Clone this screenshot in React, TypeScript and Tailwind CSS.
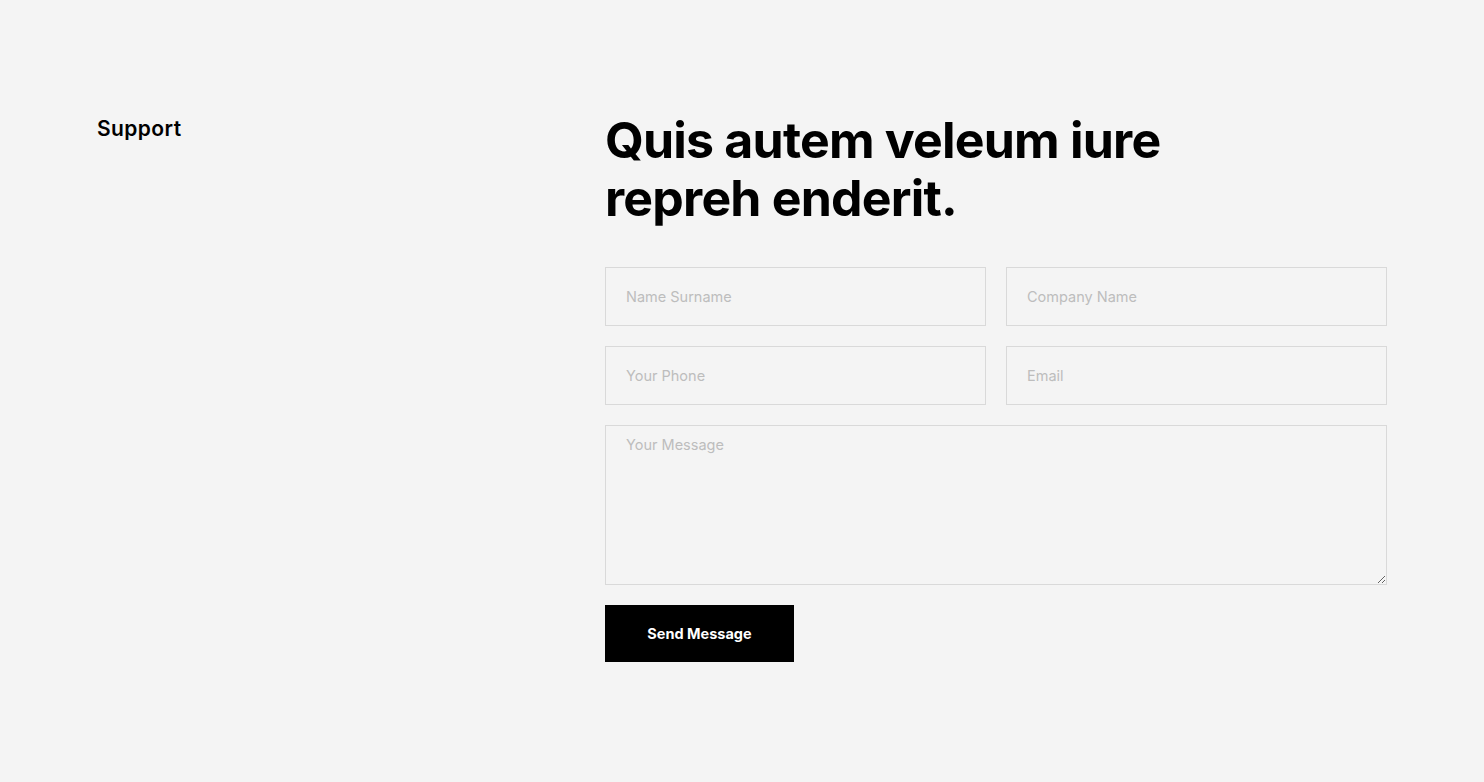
import React from 'react';

const font = { fontFamily: 'Inter, "Noto Sans", sans-serif' };

const inputClass =
  'h-[59px] w-full border border-[#d9d9d9] bg-[#f4f4f4] px-5 text-[14.5px] text-[#333] outline-none placeholder:text-[#bdbdbd]';

export default function App() {
  return (
    <div className="min-h-[782px] bg-[#f4f4f4]" style={font}>
      <div className="mx-auto flex w-[1290px] pt-[111px]">
        <div className="w-[508px] shrink-0">
          <h3 className="mt-[4px] text-[21px] font-semibold leading-[28px] tracking-[0.4px] text-black">Support</h3>
        </div>
        <div className="flex-1">
          <h2 className="text-[50px] font-bold leading-[58px] tracking-[-0.8px] text-black">
            Quis autem veleum iure
            <br />
            repreh enderit.
          </h2>
          <form className="mt-[40px] flex flex-col gap-5" onSubmit={(e) => e.preventDefault()}>
            <div className="grid grid-cols-2 gap-5">
              <input className={inputClass} placeholder="Name Surname" />
              <input className={inputClass} placeholder="Company Name" />
            </div>
            <div className="grid grid-cols-2 gap-5">
              <input className={inputClass} placeholder="Your Phone" />
              <input className={inputClass} placeholder="Email" />
            </div>
            <textarea
              className="h-[160px] w-full border border-[#d9d9d9] bg-[#f4f4f4] px-5 pt-[9px] text-[14.5px] leading-[20px] text-[#333] outline-none placeholder:text-[#bdbdbd]"
              placeholder="Your Message"
            />
            <div>
              <button
                type="submit"
                className="h-[57px] w-[189px] bg-black text-[14.5px] font-bold text-white"
              >
                Send Message
              </button>
            </div>
          </form>
        </div>
      </div>
    </div>
  );
}
